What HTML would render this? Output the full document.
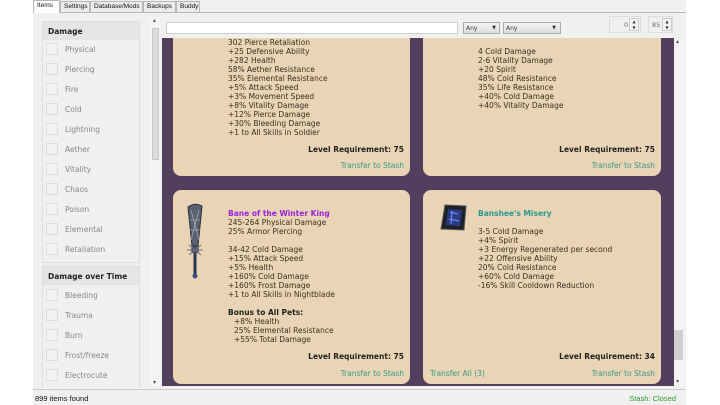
<!DOCTYPE html>
<html><head><meta charset="utf-8"><style>
*{margin:0;padding:0;box-sizing:border-box}
body{width:720px;height:405px;background:#fff;position:relative;overflow:hidden;font-family:"DejaVu Sans","Liberation Sans",sans-serif;font-size:7.5px;color:#333}
.a{position:absolute}
.tab{position:absolute;top:1px;height:11px;border:1px solid #b8b8b8;border-bottom:none;background:#ececec;font-size:6.5px;padding:1px 3px;color:#111;font-family:"Liberation Sans",sans-serif}
.card{position:absolute;background:#e9d5b5;border-radius:8px}
.t{position:absolute;line-height:9px;white-space:pre;color:#3a3020}
.lr{position:absolute;font-weight:bold;color:#222;white-space:nowrap}
.ts{position:absolute;color:#3a9a8a;white-space:nowrap}
.cb{position:absolute;left:46px;width:12px;height:12px;border:1px solid #ddd;background:#f2f2f2}
.lb{position:absolute;left:65px;color:#888;font-size:7.5px}
.hd{position:absolute;left:43px;width:96px;height:18px;background:#e5e5e5;font-weight:bold;font-size:7.5px;color:#222;padding:5px 0 0 5px}
</style></head><body>
<div class="a" style="left:33px;top:0;width:653px;height:405px;background:#f0f0f0"></div>
<div class="a" style="left:33px;top:12px;width:653px;height:1px;background:#b8b8b8"></div>
<div class="tab" style="left:33px;width:27px;background:#fff;height:13px;top:0">Items</div>
<div class="tab" style="left:60px;width:30px">Settings</div>
<div class="tab" style="left:90px;width:53px">Database/Mods</div>
<div class="tab" style="left:143px;width:33px">Backups</div>
<div class="tab" style="left:176px;width:24px">Buddy</div>
<div class="a" style="left:42px;top:21px;width:98px;height:242px;border:1px solid #ddd"></div>
<div class="hd" style="top:22px">Damage</div>
<div class="cb" style="top:43px"></div><div class="lb" style="top:45px">Physical</div>
<div class="cb" style="top:63px"></div><div class="lb" style="top:65px">Piercing</div>
<div class="cb" style="top:83px"></div><div class="lb" style="top:85px">Fire</div>
<div class="cb" style="top:103px"></div><div class="lb" style="top:105px">Cold</div>
<div class="cb" style="top:123px"></div><div class="lb" style="top:125px">Lightning</div>
<div class="cb" style="top:143px"></div><div class="lb" style="top:145px">Aether</div>
<div class="cb" style="top:163px"></div><div class="lb" style="top:165px">Vitality</div>
<div class="cb" style="top:183px"></div><div class="lb" style="top:185px">Chaos</div>
<div class="cb" style="top:203px"></div><div class="lb" style="top:205px">Poison</div>
<div class="cb" style="top:223px"></div><div class="lb" style="top:225px">Elemental</div>
<div class="cb" style="top:243px"></div><div class="lb" style="top:245px">Retaliation</div>
<div class="a" style="left:42px;top:266px;width:98px;height:122px;border:1px solid #ddd;border-bottom:none"></div>
<div class="hd" style="top:267px">Damage over Time</div>
<div class="cb" style="top:289px"></div><div class="lb" style="top:291px">Bleeding</div>
<div class="cb" style="top:309px"></div><div class="lb" style="top:311px">Trauma</div>
<div class="cb" style="top:329px"></div><div class="lb" style="top:331px">Burn</div>
<div class="cb" style="top:349px"></div><div class="lb" style="top:351px">Frost/freeze</div>
<div class="cb" style="top:369px"></div><div class="lb" style="top:371px">Electrocute</div>
<div class="a" style="left:150px;top:18px;width:10px;height:368px;background:#f4f4f4"></div>
<div class="a" style="left:152px;top:28px;width:7px;height:132px;background:#dcdcdc;border:1px solid #c8c8c8"></div>
<div class="a" style="left:153px;top:17px;font-size:6px;color:#555">▴</div>
<div class="a" style="left:153px;top:379px;font-size:6px;color:#555">▾</div>
<div class="a" style="left:166px;top:22px;width:292px;height:12px;background:#fff;border:1px solid #ccc"></div>
<div class="a" style="left:463px;top:22px;width:37px;height:12px;background:linear-gradient(#f4f4f4,#ddd);border:1px solid #aaa;font-size:6px;padding:2px 2px;color:#333">Any<span style="position:absolute;right:3px;font-size:5px">▼</span></div>
<div class="a" style="left:503px;top:22px;width:58px;height:12px;background:linear-gradient(#f4f4f4,#ddd);border:1px solid #aaa;font-size:6px;padding:2px 2px;color:#333">Any<span style="position:absolute;right:4px;font-size:5px">▼</span></div>
<div class="a" style="left:609px;top:16px;width:32px;height:17px;border:1px solid #ddd;font-size:6.5px;color:#666;padding:4px 0 0 14px">0</div>
<div class="a" style="left:629px;top:18px;width:10px;height:13px;border:1px solid #ccc;background:#f6f6f6;font-size:4px;line-height:6px;text-align:center">▲<br>▼</div>
<div class="a" style="left:648px;top:16px;width:25px;height:17px;border:1px solid #ddd;font-size:6.5px;color:#666;padding:4px 0 0 3px">85</div>
<div class="a" style="left:662px;top:18px;width:10px;height:13px;border:1px solid #ccc;background:#f6f6f6;font-size:4px;line-height:6px;text-align:center">▲<br>▼</div>
<div class="a" style="left:162px;top:38px;width:512px;height:348px;background:#523f5e"></div>
<div class="card" style="left:173px;top:38px;width:237px;height:138px;border-radius:0 0 8px 8px"></div>
<div class="card" style="left:423px;top:38px;width:238px;height:138px;border-radius:0 0 8px 8px"></div>
<div class="t" style="left:228px;top:38px">302 Pierce Retaliation
+25 Defensive Ability
+282 Health
58% Aether Resistance
35% Elemental Resistance
+5% Attack Speed
+3% Movement Speed
+8% Vitality Damage
+12% Pierce Damage
+30% Bleeding Damage
+1 to All Skills in Soldier</div>
<div class="lr" style="right:316px;top:145px">Level Requirement: 75</div>
<div class="ts" style="right:316px;top:161px">Transfer to Stash</div>
<div class="t" style="left:478px;top:47px">4 Cold Damage
2-6 Vitality Damage
+20 Spirit
48% Cold Resistance
35% Life Resistance
+40% Cold Damage
+40% Vitality Damage</div>
<div class="lr" style="right:65px;top:145px">Level Requirement: 75</div>
<div class="ts" style="right:65px;top:161px">Transfer to Stash</div>
<div class="card" style="left:173px;top:190px;width:237px;height:194px"></div>
<div class="card" style="left:423px;top:190px;width:238px;height:194px"></div>
<svg class="a" style="left:184px;top:200px" width="22" height="82" viewBox="0 0 22 82">
<path d="M4 7 Q11 2 18 6 L14 46 L8 46 Z" fill="#5a6070" stroke="#2a2e3a" stroke-width="1"/>
<path d="M7 10 L15 40 M15 10 L7 40 M6 20 L16 20 M6 30 L16 30" stroke="#a0a8b8" stroke-width="0.8"/>
<circle cx="11" cy="50" r="4" fill="#444a58"/>
<path d="M3 50 L19 50 M5 45 L17 55 M17 45 L5 55" stroke="#6a7080" stroke-width="1"/>
<rect x="9.5" y="54" width="3" height="20" fill="#2a3550"/>
<circle cx="11" cy="76" r="2.5" fill="#3a4a7a"/>
</svg>
<div class="a" style="left:228px;top:209px;color:#9a22d8;font-weight:bold;font-size:7.5px">Bane of the Winter King</div>
<div class="t" style="left:228px;top:218px">245-264 Physical Damage
25% Armor Piercing

34-42 Cold Damage
+15% Attack Speed
+5% Health
+160% Cold Damage
+160% Frost Damage
+1 to All Skills in Nightblade</div>
<div class="a" style="left:228px;top:308px;font-weight:bold;color:#222">Bonus to All Pets:</div>
<div class="t" style="left:234px;top:317px">+8% Health
25% Elemental Resistance
+55% Total Damage</div>
<div class="lr" style="right:316px;top:352px">Level Requirement: 75</div>
<div class="ts" style="right:316px;top:369px">Transfer to Stash</div>
<svg class="a" style="left:439px;top:202px" width="30" height="32" viewBox="0 0 30 32">
<path d="M6 3 L27 4 L25 28 L2 27 Z" fill="#1e2228" stroke="#555" stroke-width="1"/>
<path d="M9 7 L23 8 L21 24 L7 23 Z" fill="#2a3a80"/>
<path d="M11 10 L19 12 M10 17 L20 19 M13 9 L12 22" stroke="#6a8af0" stroke-width="1.2"/>
</svg>
<div class="a" style="left:478px;top:209px;color:#2a9a90;font-weight:bold;font-size:7.5px">Banshee's Misery</div>
<div class="t" style="left:478px;top:227px">3-5 Cold Damage
+4% Spirit
+3 Energy Regenerated per second
+22 Offensive Ability
20% Cold Resistance
+60% Cold Damage
-16% Skill Cooldown Reduction</div>
<div class="lr" style="right:65px;top:352px">Level Requirement: 34</div>
<div class="ts" style="left:430px;top:369px">Transfer All (3)</div>
<div class="ts" style="right:65px;top:369px">Transfer to Stash</div>
<div class="a" style="left:674px;top:38px;width:10px;height:348px;background:#f4f4f4"></div>
<div class="a" style="left:674px;top:330px;width:9px;height:30px;background:#d0d0d0"></div>
<div class="a" style="left:676px;top:38px;font-size:6px;color:#555">▴</div>
<div class="a" style="left:676px;top:378px;font-size:6px;color:#555">▾</div>
<div class="a" style="left:33px;top:389px;width:653px;height:1px;background:#ccc"></div>
<div class="a" style="left:35px;top:394px;font-size:7.5px;color:#111;font-family:'Liberation Sans',sans-serif">899 items found</div>
<div class="a" style="right:44px;top:394px;font-size:7.5px;color:#2a9a2a;font-family:'Liberation Sans',sans-serif">Stash: Closed</div>
</body></html>
